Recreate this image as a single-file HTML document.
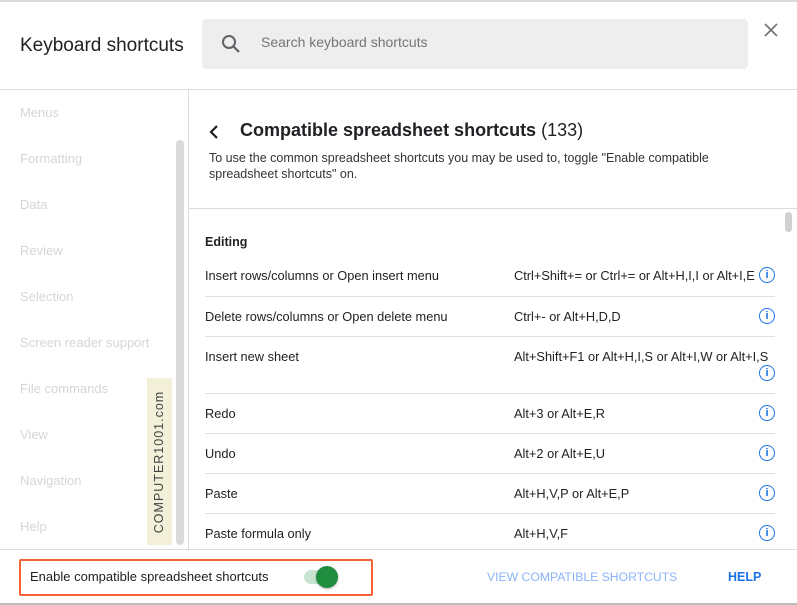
<!DOCTYPE html><html><head><style>
body{margin:0;width:797px;height:605px;overflow:hidden;background:#fff;font-family:"Liberation Sans",Arial,sans-serif;position:relative}
.a{position:absolute}
.nav{position:absolute;left:20px;font-size:13px;color:#d6d6d6}
.row{position:absolute;left:205px;width:570px;border-bottom:1px solid #e0e0e0;font-size:12.8px;color:#222}
.row .l{position:absolute;left:0}
.row .r{position:absolute;left:309px}
.info{position:absolute;right:0;width:14px;height:14px;border:1.5px solid #1a73e8;border-radius:50%;color:#1a73e8;font-size:11px;font-weight:bold;text-align:center;line-height:14px;font-family:"Liberation Sans",sans-serif}
</style></head><body>
<div class="a" style="left:0;top:0;width:797px;height:2px;background:#dadada"></div>
<div class="a" style="left:20px;top:35px;font-size:19px;color:#202124">Keyboard shortcuts</div>
<div class="a" style="left:202px;top:19px;width:546px;height:50px;background:#eeeeee;border-radius:4px"></div>
<svg class="a" style="left:220px;top:33px" width="22" height="22" viewBox="0 0 22 22"><circle cx="9" cy="9" r="6" fill="none" stroke="#5f6368" stroke-width="2"/><path d="M13.5 13.5L19 19" stroke="#5f6368" stroke-width="2.2"/></svg>
<div class="a" style="left:261px;top:34px;font-size:14px;color:#757575">Search keyboard shortcuts</div>
<svg class="a" style="left:763px;top:22px" width="16" height="16"><path d="M2 2L14 14M14 2L2 14" stroke="#777" stroke-width="1.8"/></svg>
<div class="a" style="left:0;top:89px;width:797px;height:1px;background:#dcdcdc"></div>
<div class="a" style="left:188px;top:90px;width:1px;height:459px;background:#dcdcdc"></div>
<div class="nav" style="top:105px">Menus</div>
<div class="nav" style="top:151px">Formatting</div>
<div class="nav" style="top:197px">Data</div>
<div class="nav" style="top:243px">Review</div>
<div class="nav" style="top:289px">Selection</div>
<div class="nav" style="top:335px">Screen reader support</div>
<div class="nav" style="top:381px">File commands</div>
<div class="nav" style="top:427px">View</div>
<div class="nav" style="top:473px">Navigation</div>
<div class="nav" style="top:519px">Help</div>
<div class="a" style="left:176px;top:140px;width:8px;height:405px;background:#dadada;border-radius:4px"></div>
<div class="a" style="left:147px;top:378px;width:25px;height:167px;background:#f2f0d8"></div>
<div class="a" style="left:147px;top:378px;width:25px;height:167px;"><div style="position:absolute;left:12px;top:84px;transform:translate(-50%,-50%) rotate(-90deg);white-space:nowrap;font-size:12.5px;letter-spacing:1px;color:#444">COMPUTER1001.com</div></div>
<svg class="a" style="left:207px;top:124px" width="14" height="16"><path d="M10 2L4 8L10 14" fill="none" stroke="#202124" stroke-width="2.2"/></svg>
<div class="a" style="left:240px;top:120px;font-size:18px;color:#202124"><b>Compatible spreadsheet shortcuts</b> (133)</div>
<div class="a" style="left:209px;top:150px;width:540px;font-size:12.5px;line-height:16px;color:#333">To use the common spreadsheet shortcuts you may be used to, toggle "Enable compatible spreadsheet shortcuts" on.</div>
<div class="a" style="left:189px;top:208px;width:608px;height:1px;background:#dcdcdc"></div>
<div class="a" style="left:785px;top:212px;width:7px;height:20px;background:#d0d0d0;border-radius:4px"></div>
<div class="a" style="left:205px;top:235px;font-size:12.5px;font-weight:bold;color:#222">Editing</div>
<div class="row" style="top:256px;height:40px"><span class="l" style="top:12px">Insert rows/columns or Open insert menu</span><span class="r" style="top:12px">Ctrl+Shift+= or Ctrl+= or Alt+H,I,I or Alt+I,E</span><span class="info" style="top:11px">i</span></div>
<div class="row" style="top:297px;height:39px"><span class="l" style="top:12px">Delete rows/columns or Open delete menu</span><span class="r" style="top:12px">Ctrl+- or Alt+H,D,D</span><span class="info" style="top:11px">i</span></div>
<div class="row" style="top:337px;height:56px"><span class="l" style="top:12px">Insert new sheet</span><span class="r" style="top:12px">Alt+Shift+F1 or Alt+H,I,S or Alt+I,W or Alt+I,S</span><span class="info" style="top:28px">i</span></div>
<div class="row" style="top:394px;height:39px"><span class="l" style="top:12px">Redo</span><span class="r" style="top:12px">Alt+3 or Alt+E,R</span><span class="info" style="top:11px">i</span></div>
<div class="row" style="top:434px;height:39px"><span class="l" style="top:12px">Undo</span><span class="r" style="top:12px">Alt+2 or Alt+E,U</span><span class="info" style="top:11px">i</span></div>
<div class="row" style="top:474px;height:39px"><span class="l" style="top:12px">Paste</span><span class="r" style="top:12px">Alt+H,V,P or Alt+E,P</span><span class="info" style="top:11px">i</span></div>
<div class="row" style="top:514px;height:35px;border:none"><span class="l" style="top:12px">Paste formula only</span><span class="r" style="top:12px">Alt+H,V,F</span><span class="info" style="top:11px">i</span></div>
<div class="a" style="left:0;top:549px;width:797px;height:1px;background:#dcdcdc"></div>
<div class="a" style="left:19px;top:559px;width:350px;height:33px;border:2px solid #f4623a;border-radius:2px"></div>
<div class="a" style="left:30px;top:569px;font-size:13px;color:#202124">Enable compatible spreadsheet shortcuts</div>
<div class="a" style="left:304px;top:570px;width:34px;height:14px;border-radius:7px;background:#c8e3d0"></div>
<div class="a" style="left:316px;top:566px;width:22px;height:22px;border-radius:50%;background:#1e8e3e;box-shadow:0 1px 2px rgba(0,0,0,.3)"></div>
<div class="a" style="left:487px;top:570px;font-size:12.2px;color:#8ab4f8">VIEW COMPATIBLE SHORTCUTS</div>
<div class="a" style="left:728px;top:570px;font-size:12.5px;color:#1a73e8;font-weight:bold">HELP</div>
<div class="a" style="left:0;top:603px;width:797px;height:2px;background:#bdbdbd"></div>
</body></html>
